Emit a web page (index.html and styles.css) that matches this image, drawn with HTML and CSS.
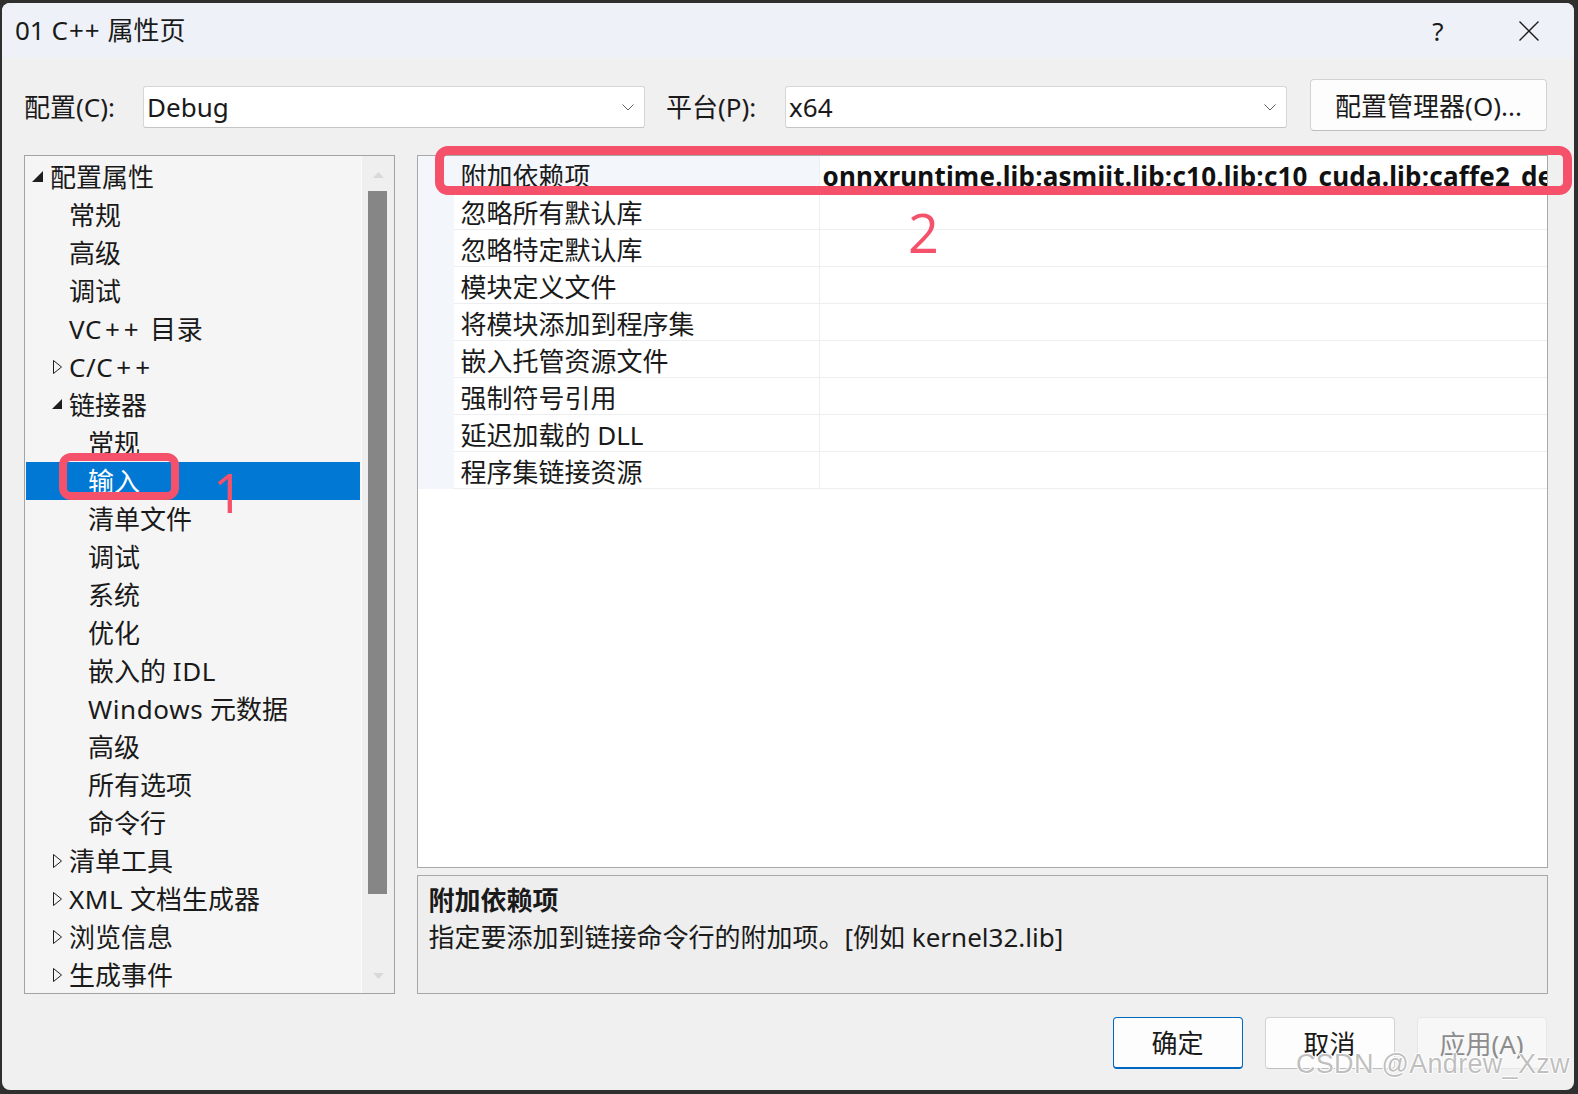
FILE: index.html
```html
<!DOCTYPE html>
<html lang="zh-CN">
<head>
<meta charset="utf-8">
<title>01 C++ 属性页</title>
<link rel="stylesheet" href="styles.css">
</head>
<body>
<div class="window">
  <div class="titlebar">
    <span class="title">01 C<span class="tpp">++</span> 属性页</span>
    <span class="help">?</span>
    <span class="close"><svg width="20" height="20" viewBox="0 0 20 20"><path d="M0.5 0.5 L19.5 19.5 M19.5 0.5 L0.5 19.5" stroke="#1a1a1a" stroke-width="1.4" fill="none"/></svg></span>
  </div>
  <div class="content">
    <div class="toolbar">
      <span class="lbl lbl-cfg">配置(C):</span>
      <div class="combo"><span class="combo-text">Debug</span><svg class="chev" width="12" height="7" viewBox="0 0 12 7"><polyline points="0.5,0.5 6,6 11.5,0.5" fill="none" stroke="#606060" stroke-width="1"/></svg></div>
      <span class="lbl lbl-plat">平台(P):</span>
      <div class="combo"><span class="combo-text">x64</span><svg class="chev" width="12" height="7" viewBox="0 0 12 7"><polyline points="0.5,0.5 6,6 11.5,0.5" fill="none" stroke="#606060" stroke-width="1"/></svg></div>
      <div class="btn btn-mgr">配置管理器(O)...</div>
    </div>
    <div class="main">
      <div class="tree">
        <div class="tree-list">
          <div class="trow l0"><span class="tw"><svg width="11" height="11" viewBox="0 0 11 11"><polygon points="11,0 11,11 0,11" fill="#1e1e1e"/></svg></span><span>配置属性</span></div>
          <div class="trow l1"><span class="tw"></span><span>常规</span></div>
          <div class="trow l1"><span class="tw"></span><span>高级</span></div>
          <div class="trow l1"><span class="tw"></span><span>调试</span></div>
          <div class="trow l1"><span class="tw"></span><span class="lat">VC<span class="pp">++</span> 目录</span></div>
          <div class="trow l1"><span class="tw"><svg class="collapsed" width="9" height="14" viewBox="0 0 9 14"><polygon points="0.5,0.5 8.5,7 0.5,13.5" fill="none" stroke="#1e1e1e" stroke-width="1"/></svg></span><span class="lat">C/C<span class="pp">++</span></span></div>
          <div class="trow l1"><span class="tw"><svg class="expanded" width="10" height="10" viewBox="0 0 10 10"><polygon points="10,0 10,10 0,10" fill="#1e1e1e"/></svg></span><span>链接器</span></div>
          <div class="trow l2"><span class="tw"></span><span>常规</span></div>
          <div class="trow l2 sel"><span class="tw"></span><span>输入</span></div>
          <div class="trow l2"><span class="tw"></span><span>清单文件</span></div>
          <div class="trow l2"><span class="tw"></span><span>调试</span></div>
          <div class="trow l2"><span class="tw"></span><span>系统</span></div>
          <div class="trow l2"><span class="tw"></span><span>优化</span></div>
          <div class="trow l2"><span class="tw"></span><span>嵌入的 <span class="lat">IDL</span></span></div>
          <div class="trow l2"><span class="tw"></span><span><span class="lat">Windows</span> 元数据</span></div>
          <div class="trow l2"><span class="tw"></span><span>高级</span></div>
          <div class="trow l2"><span class="tw"></span><span>所有选项</span></div>
          <div class="trow l2"><span class="tw"></span><span>命令行</span></div>
          <div class="trow l1"><span class="tw"><svg class="collapsed" width="9" height="14" viewBox="0 0 9 14"><polygon points="0.5,0.5 8.5,7 0.5,13.5" fill="none" stroke="#1e1e1e" stroke-width="1"/></svg></span><span>清单工具</span></div>
          <div class="trow l1"><span class="tw"><svg class="collapsed" width="9" height="14" viewBox="0 0 9 14"><polygon points="0.5,0.5 8.5,7 0.5,13.5" fill="none" stroke="#1e1e1e" stroke-width="1"/></svg></span><span><span class="lat">XML</span> 文档生成器</span></div>
          <div class="trow l1"><span class="tw"><svg class="collapsed" width="9" height="14" viewBox="0 0 9 14"><polygon points="0.5,0.5 8.5,7 0.5,13.5" fill="none" stroke="#1e1e1e" stroke-width="1"/></svg></span><span>浏览信息</span></div>
          <div class="trow l1"><span class="tw"><svg class="collapsed" width="9" height="14" viewBox="0 0 9 14"><polygon points="0.5,0.5 8.5,7 0.5,13.5" fill="none" stroke="#1e1e1e" stroke-width="1"/></svg></span><span>生成事件</span></div>
        </div>
        <div class="scrollbar">
          <div class="sb-up"><svg width="11" height="6" viewBox="0 0 11 6"><polygon points="0,6 5.5,0 11,6" fill="#d9d9d9"/></svg></div>
          <div class="sb-thumb"></div>
          <div class="sb-down"><svg width="11" height="6" viewBox="0 0 11 6"><polygon points="0,0 5.5,6 11,0" fill="#d9d9d9"/></svg></div>
        </div>
      </div>
      <div class="right">
        <div class="grid">
          <div class="grow focus"><span class="gut"></span><span class="gname">附加依赖项</span><span class="gval">onnxruntime.lib;asmjit.lib;c10.lib;c10_cuda.lib;caffe2_detectron_ops_gpu.lib;caffe2_module_test_dynamic.lib</span></div>
          <div class="grow"><span class="gut"></span><span class="gname">忽略所有默认库</span><span class="gval"></span></div>
          <div class="grow"><span class="gut"></span><span class="gname">忽略特定默认库</span><span class="gval"></span></div>
          <div class="grow"><span class="gut"></span><span class="gname">模块定义文件</span><span class="gval"></span></div>
          <div class="grow"><span class="gut"></span><span class="gname">将模块添加到程序集</span><span class="gval"></span></div>
          <div class="grow"><span class="gut"></span><span class="gname">嵌入托管资源文件</span><span class="gval"></span></div>
          <div class="grow"><span class="gut"></span><span class="gname">强制符号引用</span><span class="gval"></span></div>
          <div class="grow"><span class="gut"></span><span class="gname">延迟加载的 DLL</span><span class="gval"></span></div>
          <div class="grow"><span class="gut"></span><span class="gname">程序集链接资源</span><span class="gval"></span></div>
        </div>
        <div class="desc">
          <div class="desc-title">附加依赖项</div>
          <div class="desc-text">指定要添加到链接命令行的附加项。[例如 kernel32.lib]</div>
        </div>
      </div>
    </div>
    <div class="footer">
      <div class="btn btn-ok">确定</div>
      <div class="btn">取消</div>
      <div class="btn btn-disabled">应用(A)</div>
    </div>
  </div>
  <div class="mark mark-box1"></div>
  <div class="mark mark-box2"></div>
  <div class="mark-num num1">1</div>
  <div class="mark-num num2">2</div>
  <div class="watermark">CSDN @Andrew_Xzw</div>
</div>
</body>
</html>
```

FILE: styles.css
```css
* { box-sizing: border-box; }

html, body {
  margin: 0;
  padding: 0;
}

body {
  width: 1578px;
  height: 1094px;
  overflow: hidden;
  background: #2f2f2f;
  font-family: "Noto Sans", "Noto Sans CJK SC", sans-serif;
  font-size: 26px;
  color: #1a1a1a;
}

.window {
  position: relative;
  margin: 3px 0 0 2px;
  width: 1572px;
  height: 1087px;
  background: #f0f0f0;
  border-radius: 8px;
  overflow: hidden;
  display: flex;
  flex-direction: column;
}

/* title bar */
.titlebar {
  height: 55px;
  flex: none;
  background: #eef2f8;
  display: flex;
  align-items: center;
  padding-left: 13px;
}

.title {
  line-height: 30px;
  white-space: nowrap;
  margin-top: -1px;
}

.tpp { letter-spacing: 1px; margin-left: 1px; }

.help {
  margin-left: auto;
  width: 46px;
  text-align: center;
  line-height: 30px;
}

.close {
  width: 46px;
  margin-left: 45px;
  margin-right: 22px;
  display: flex;
  justify-content: center;
}

.close svg { display: block; }

/* content */
.content {
  flex: 1;
  display: flex;
  flex-direction: column;
  padding: 0 26px 0 22px;
}

.toolbar {
  margin-top: 21px;
  height: 52px;
  display: flex;
  align-items: flex-start;
  flex: none;
}

.lbl {
  margin-top: 7px;
  line-height: 42px;
  white-space: nowrap;
}

.lbl-cfg { width: 119px; }

.lbl-plat {
  width: 119px;
  margin-left: 21px;
}

.combo {
  margin-top: 7px;
  width: 502px;
  height: 42px;
  background: #ffffff;
  border: 1px solid #d6d6d6;
  border-bottom-color: #c4c4c4;
  border-radius: 3px;
  display: flex;
  align-items: center;
  padding: 0 10px 0 3px;
}

.combo-text {
  flex: 1;
  line-height: 40px;
}

.chev { display: block; }

.btn {
  width: 130px;
  height: 52px;
  background: #fdfdfd;
  border: 1px solid #d2d2d2;
  border-bottom-color: #bdbdbd;
  border-radius: 4px;
  display: flex;
  align-items: center;
  justify-content: center;
  white-space: nowrap;
}

.btn-mgr {
  width: 237px;
  margin-left: 23px;
}

.btn-ok {
  border: 1px solid #0067c0;
  border-bottom: 2px solid #0067c0;
}

.btn-disabled {
  background: #f7f7f7;
  border-color: #e6e6e6;
  color: #8c8c8c;
}

/* main */
.main {
  margin-top: 24px;
  height: 839px;
  flex: none;
  display: flex;
  gap: 21.5px;
}

.tree {
  width: 371px;
  flex: none;
  border: 1px solid #a3a3a3;
  background: #f5f5f5;
  display: flex;
  overflow: hidden;
}

.tree-list {
  flex: 1;
  padding-top: 2px;
  overflow: hidden;
}

.trow {
  height: 38px;
  display: flex;
  align-items: center;
  line-height: 38px;
  white-space: nowrap;
}

.lat { letter-spacing: 0.6px; }

.pp {
  letter-spacing: 4px;
  margin-left: 3px;
}

.trow.l0 { padding-left: 7px; }
.trow.l1 { padding-left: 26px; }
.trow.l2 { padding-left: 45px; }

.tw {
  width: 18px;
  flex: none;
  display: flex;
  align-items: center;
}

.tw svg { display: block; }
.tw svg.collapsed { margin-left: 2px; }
.tw svg.expanded { margin-left: 1px; margin-top: -3px; }
.trow.l0 .tw svg { margin-top: -2px; }

.trow.sel {
  background: #0078d4;
  color: #ffffff;
  margin: 0 1px;
  padding-left: 44px;
}

.scrollbar {
  width: 33px;
  flex: none;
  background: #efefef;
  border-left: 1px solid #fbfbfb;
  display: flex;
  flex-direction: column;
}

.sb-up {
  height: 35px;
  display: flex;
  justify-content: center;
  align-items: center;
  padding-top: 3px;
}

.sb-thumb {
  width: 19px;
  height: 703px;
  margin-left: 6px;
  background: #868686;
}

.sb-down {
  flex: 1;
  display: flex;
  justify-content: center;
  align-items: flex-end;
  padding-bottom: 14px;
}

.sb-up svg, .sb-down svg { display: block; }

/* right column */
.right {
  flex: 1;
  display: flex;
  flex-direction: column;
  gap: 7px;
  min-width: 0;
}

.grid {
  height: 713px;
  flex: none;
  background: #ffffff;
  border: 1px solid #a8a8a8;
  overflow: hidden;
}

.grow {
  display: grid;
  grid-template-columns: 36px 366px 1fr;
  height: 37px;
}

.gut { background: #f3f6fb; }

.gname {
  padding-left: 7px;
  padding-top: 5px;
  line-height: 31px;
  border-bottom: 1px solid #eceef2;
  border-right: 1px solid #eceef2;
  white-space: nowrap;
}

.gval {
  padding-left: 3px;
  padding-top: 5px;
  line-height: 31px;
  border-bottom: 1px solid #eceef2;
  white-space: nowrap;
  overflow: hidden;
  font-weight: 700;
  letter-spacing: 0.2px;
  color: #111111;
}

.grow.focus .gname { background: #f3f6fb; }

.desc {
  flex: 1;
  background: #eeeeee;
  border: 1px solid #a8a8a8;
  padding: 6px 11px;
}

.desc-title {
  font-weight: 700;
  line-height: 37px;
}

.desc-text {
  line-height: 37px;
}

/* footer */
.footer {
  margin-top: 22.5px;
  margin-right: 1.5px;
  height: 52px;
  flex: none;
  display: flex;
  justify-content: flex-end;
  gap: 22px;
}

/* annotations */
.mark {
  position: absolute;
  border-style: solid;
  border-color: #f5516a;
}

.mark-box1 {
  left: 57px;
  top: 450px;
  width: 120px;
  height: 47px;
  border-width: 8px;
  border-radius: 12px;
}

.mark-box2 {
  left: 433px;
  top: 143px;
  width: 1137px;
  height: 49px;
  border-width: 9px;
  border-radius: 13px;
}

.mark-num {
  position: absolute;
  font-family: "Open Sans", "Noto Sans", sans-serif;
  font-weight: 400;
  font-size: 54px;
  line-height: 54px;
  color: #f5516a;
}

.num1 { left: 211px; top: 462px; }
.num2 { left: 906px; top: 202px; }

.watermark {
  position: absolute;
  left: 1294px;
  top: 1046px;
  font-family: "Liberation Sans", Arial, sans-serif;
  font-size: 27px;
  letter-spacing: 0.3px;
  line-height: 30px;
  color: rgba(170, 170, 170, 0.75);
  text-shadow: 1px 0 0 #ffffff, -1px 0 0 #ffffff, 0 1px 0 #ffffff, 0 -1px 0 #ffffff;
  white-space: nowrap;
}
```
